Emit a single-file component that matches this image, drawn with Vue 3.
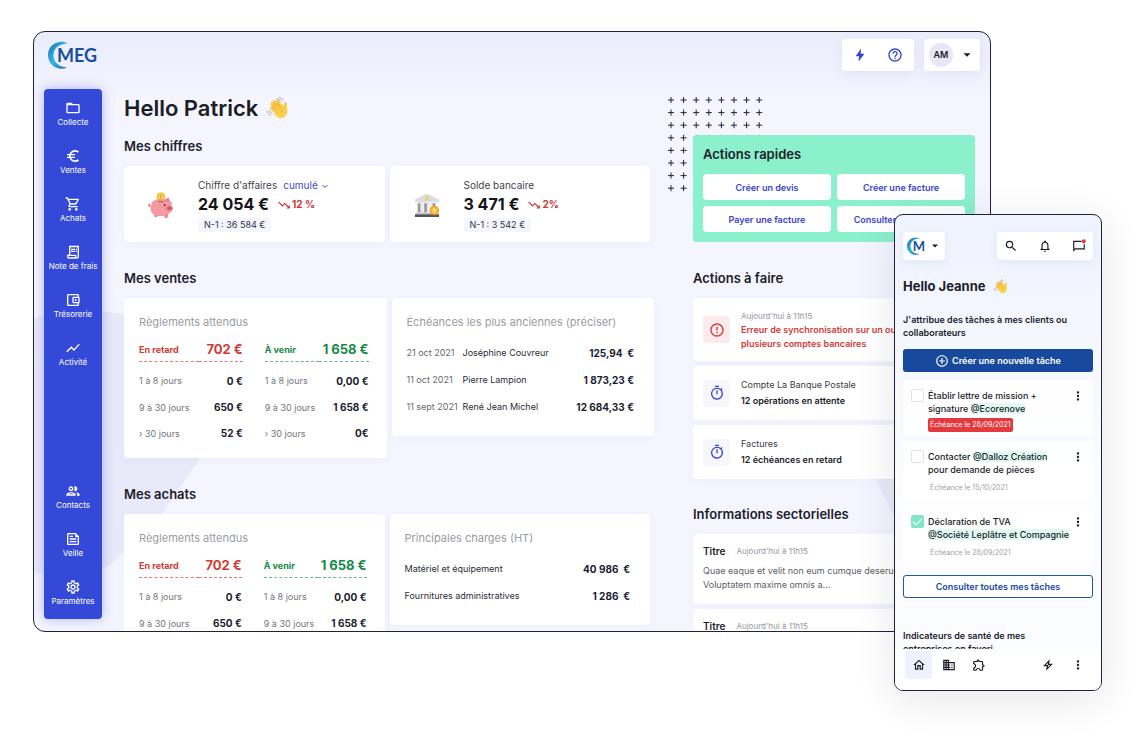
<script setup>
import { ref } from 'vue'

const icons = {
  folder: 'M20 18H4V8h16m0-2h-8l-2-2H4a2 2 0 0 0-2 2v12a2 2 0 0 0 2 2h16a2 2 0 0 0 2-2V8a2 2 0 0 0-2-2z',
  euro: 'M15 18.5c-2.51 0-4.68-1.42-5.76-3.5H15v-2H8.58c-.05-.33-.08-.66-.08-1s.03-.67.08-1H15V9H9.24C10.32 6.92 12.5 5.5 15 5.5c1.61 0 3.09.59 4.23 1.57L21 5.3C19.41 3.87 17.3 3 15 3c-3.92 0-7.24 2.51-8.48 6H3v2h3.06c-.04.33-.06.66-.06 1s.02.67.06 1H3v2h3.52c1.24 3.49 4.56 6 8.48 6 2.31 0 4.41-.87 6-2.3l-1.78-1.77c-1.13.98-2.6 1.57-4.22 1.57z',
  cart: 'M15.55 13c.75 0 1.41-.41 1.75-1.03l3.58-6.49A.996.996 0 0 0 20.01 4H5.21l-.94-2H1v2h2l3.6 7.59-1.35 2.44C4.52 15.37 5.48 17 7 17h12v-2H7l1.1-2h7.45zM6.16 6h12.15l-2.76 5H8.53L6.16 6zM7 18c-1.1 0-1.99.9-1.99 2S5.9 22 7 22s2-.9 2-2-.9-2-2-2zm10 0c-1.1 0-1.99.9-1.99 2s.89 2 1.99 2 2-.9 2-2-.9-2-2-2z',
  receipt: 'M19.5 3.5 18 2l-1.5 1.5L15 2l-1.5 1.5L12 2l-1.5 1.5L9 2 7.5 3.5 6 2v14H3v3c0 1.66 1.34 3 3 3h12c1.66 0 3-1.34 3-3V2l-1.5 1.5zM15 20H6c-.55 0-1-.45-1-1v-1h10v2zm4-1c0 .55-.45 1-1 1s-1-.45-1-1v-3H8V5h11v14zM9 7h6v2H9zM16 7h2v2h-2zM9 10h6v2H9zM16 10h2v2h-2z',
  wallet: 'M21 7.28V5c0-1.1-.9-2-2-2H5a2 2 0 0 0-2 2v14a2 2 0 0 0 2 2h14c1.1 0 2-.9 2-2v-2.28A2 2 0 0 0 22 15V9a2 2 0 0 0-1-1.72zM20 9v6h-7V9h7zM5 19V5h14v2h-6c-1.1 0-2 .9-2 2v6c0 1.1.9 2 2 2h6v2H5zM16 10.5a1.5 1.5 0 1 0 0 3 1.5 1.5 0 0 0 0-3z',
  chart: 'M3.5 18.49l6-6.01 4 4L22 6.92l-1.41-1.41-7.09 7.97-4-4L2 16.99z',
  people: 'M9 13.75c-2.34 0-7 1.17-7 3.5V19h14v-1.75c0-2.33-4.66-3.5-7-3.5zM4.34 17c.84-.58 2.87-1.25 4.66-1.25s3.82.67 4.66 1.25H4.34zM9 12c1.93 0 3.5-1.57 3.5-3.5S10.93 5 9 5 5.5 6.57 5.5 8.5 7.07 12 9 12zm0-5c.83 0 1.5.67 1.5 1.5S9.83 10 9 10s-1.5-.67-1.5-1.5S8.17 7 9 7zm7.04 6.81c1.16.84 1.96 1.96 1.96 3.44V19h4v-1.75c0-2.02-3.5-3.17-5.96-3.44zM15 12c1.93 0 3.5-1.57 3.5-3.5S16.93 5 15 5c-.54 0-1.04.13-1.5.35.63.89 1 1.98 1 3.15s-.37 2.26-1 3.15c.46.22.96.35 1.5.35z',
  feed: 'M16 3H5c-1.1 0-2 .9-2 2v14c0 1.1.9 2 2 2h14c1.1 0 2-.9 2-2V8l-5-5zm3 16H5V5h10v4h4v10zM7 17h10v-2H7v2zm5-10H7v2h5V7zm-5 6h10v-2H7v2z',
  settings: 'M19.43 12.98c.04-.32.07-.64.07-.98 0-.34-.03-.66-.07-.98l2.11-1.65c.19-.15.24-.42.12-.64l-2-3.46a.5.5 0 0 0-.61-.22l-2.49 1c-.52-.4-1.08-.73-1.69-.98l-.38-2.65A.488.488 0 0 0 14 2h-4c-.25 0-.46.18-.49.42l-.38 2.65c-.61.25-1.17.59-1.69.98l-2.49-1a.5.5 0 0 0-.61.22l-2 3.46c-.13.22-.07.49.12.64l2.11 1.65c-.04.32-.07.65-.07.98 0 .33.03.66.07.98l-2.11 1.65c-.19.15-.24.42-.12.64l2 3.46a.5.5 0 0 0 .61.22l2.49-1c.52.4 1.08.73 1.69.98l.38 2.65c.03.24.24.42.49.42h4c.25 0 .46-.18.49-.42l.38-2.65c.61-.25 1.17-.59 1.69-.98l2.49 1a.5.5 0 0 0 .61-.22l2-3.46c.12-.22.07-.49-.12-.64l-2.11-1.65zm-1.98-1.71c.04.31.05.52.05.73 0 .21-.02.43-.05.73l-.14 1.13.89.7 1.08.84-.7 1.21-1.27-.51-1.04-.42-.9.68c-.43.32-.84.56-1.25.73l-1.06.43-.16 1.13-.2 1.35h-1.4l-.19-1.35-.16-1.13-1.06-.43c-.43-.18-.83-.41-1.23-.71l-.91-.7-1.06.43-1.27.51-.7-1.21 1.08-.84.89-.7-.14-1.13c-.03-.31-.05-.54-.05-.74s.02-.43.05-.73l.14-1.13-.89-.7-1.08-.84.7-1.21 1.27.51 1.04.42.9-.68c.43-.32.84-.56 1.25-.73l1.06-.43.16-1.13.2-1.35h1.39l.19 1.35.16 1.13 1.06.43c.43.18.83.41 1.23.71l.91.7 1.06-.43 1.27-.51.7 1.21-1.07.85-.89.7.14 1.13zM12 8c-2.21 0-4 1.79-4 4s1.79 4 4 4 4-1.79 4-4-1.79-4-4-4zm0 6c-1.1 0-2-.9-2-2s.9-2 2-2 2 .9 2 2-.9 2-2 2z',
  bolt: 'M10.500 22h-1l1-8H5.500c-.6 0-.6-.4-.4-.8L13 2h1l-1 8h5.500c.5 0 .6.4.5.6z',
  help: 'M11 18h2v-2h-2v2zm1-16C6.48 2 2 6.48 2 12s4.48 10 10 10 10-4.48 10-10S17.52 2 12 2zm0 18c-4.41 0-8-3.59-8-8s3.59-8 8-8 8 3.59 8 8-3.59 8-8 8zm0-14c-2.21 0-4 1.79-4 4h2c0-1.1.9-2 2-2s2 .9 2 2c0 2-3 1.75-3 5h2c0-2.25 3-2.5 3-5 0-2.21-1.79-4-4-4z',
  down: 'M16 18l2.29-2.29-4.88-4.88-4 4L2 7.41 3.41 6l6 6 4-4 6.3 6.29L22 12v6z',
  error: 'M11 15h2v2h-2v-2zm0-8h2v6h-2V7zm.99-5C6.47 2 2 6.48 2 12s4.47 10 9.99 10C17.52 22 22 17.52 22 12S17.52 2 11.99 2zM12 20c-4.42 0-8-3.58-8-8s3.58-8 8-8 8 3.58 8 8-3.58 8-8 8z',
  timer: 'M15 1H9v2h6V1zm-4 13h2V8h-2v6zm8.03-6.61 1.42-1.42c-.43-.51-.9-.99-1.41-1.41l-1.42 1.42A8.962 8.962 0 0 0 12 4c-4.97 0-9 4.03-9 9s4.02 9 9 9a8.994 8.994 0 0 0 7.03-14.61zM12 20c-3.87 0-7-3.13-7-7s3.13-7 7-7 7 3.13 7 7-3.13 7-7 7z',
  search: 'M15.5 14h-.79l-.28-.27A6.471 6.471 0 0 0 16 9.5 6.5 6.5 0 1 0 9.5 16c1.61 0 3.09-.59 4.23-1.57l.27.28v.79l5 4.99L20.49 19l-4.99-5zm-6 0C7.01 14 5 11.99 5 9.5S7.01 5 9.5 5 14 7.01 14 9.5 11.99 14 9.5 14z',
  bell: 'M12 22c1.1 0 2-.9 2-2h-4c0 1.1.9 2 2 2zm6-6v-5c0-3.07-1.63-5.64-4.5-6.32V4c0-.83-.67-1.5-1.5-1.5s-1.5.67-1.5 1.5v.68C7.64 5.36 6 7.92 6 11v5l-2 2v1h16v-1l-2-2zm-2 1H8v-6c0-2.48 1.51-4.5 4-4.5s4 2.02 4 4.5v6z',
  chat: 'M16 3H2v19l4-4h16V9h-2v7H5l-1 1V5h12z',
  plus: 'M13 7h-2v4H7v2h4v4h2v-4h4v-2h-4V7zm-1-5C6.48 2 2 6.48 2 12s4.48 10 10 10 10-4.48 10-10S17.52 2 12 2zm0 18c-4.41 0-8-3.59-8-8s3.59-8 8-8 8 3.59 8 8-3.59 8-8 8z',
  home: 'M12 5.69l5 4.5V18h-2v-6H9v6H7v-7.81l5-4.5M12 3L2 12h3v8h6v-6h2v6h6v-8h3L12 3z',
  building: 'M12 7V3H2v18h20V7H12zM6 19H4v-2h2v2zm0-4H4v-2h2v2zm0-4H4V9h2v2zm0-4H4V5h2v2zm4 12H8v-2h2v2zm0-4H8v-2h2v2zm0-4H8V9h2v2zm0-4H8V5h2v2zm10 12h-8v-2h2v-2h-2v-2h2v-2h-2V9h8v10zm-2-8h-2v2h2v-2zm0 4h-2v2h2v-2z',
  puzzle: 'M10.5 4.5c.28 0 .5.22.5.5v2h6v6h2c.28 0 .5.22.5.5s-.22.5-.5.5h-2v6h-2.12c-.68-1.75-2.39-3-4.38-3s-3.7 1.25-4.38 3H4v-2.12c1.75-.68 3-2.39 3-4.38 0-1.99-1.24-3.7-2.99-4.38L4 7h6V5c0-.28.22-.5.5-.5m0-2A2.5 2.5 0 0 0 8 5H4c-1.1 0-1.99.9-1.99 2v3.8h.29c1.49 0 2.7 1.21 2.7 2.7s-1.21 2.7-2.7 2.7H2V20c0 1.1.9 2 2 2h3.8v-.3c0-1.49 1.21-2.7 2.7-2.7s2.7 1.21 2.7 2.7v.3H17c1.1 0 2-.9 2-2v-4a2.5 2.5 0 0 0 0-5V7c0-1.1-.9-2-2-2h-4a2.5 2.5 0 0 0-2.5-2.5z',
  boltLine: 'M15 2 3.5 14H10l-1.5 8L20.5 10H14zM11.8 8.2 11.500 12h4.200l-3.600 3.800.4-3.800H8.200z',
  more: 'M12 8c1.1 0 2-.9 2-2s-.9-2-2-2-2 .9-2 2 .9 2 2 2zm0 2c-1.1 0-2 .9-2 2s.9 2 2 2 2-.9 2-2-.9-2-2-2zm0 6c-1.1 0-2 .9-2 2s.9 2 2 2 2-.9 2-2-.9-2-2-2z',
  caret: 'M6 9h12l-6 6z'
}

const navTop = [
  { icon: 'folder', label: 'Collecte' },
  { icon: 'euro', label: 'Ventes' },
  { icon: 'cart', label: 'Achats' },
  { icon: 'receipt', label: 'Note de frais' },
  { icon: 'wallet', label: 'Trésorerie' },
  { icon: 'chart', label: 'Activité' }
]
const navBottom = [
  { icon: 'people', label: 'Contacts' },
  { icon: 'feed', label: 'Veille' },
  { icon: 'settings', label: 'Paramètres' }
]

const settlements = [
  { kind: 'late', title: 'En retard', total: '702 €', rows: [['1 à 8 jours', '0 €'], ['9 à 30 jours', '650 €'], ['› 30 jours', '52 €']] },
  { kind: 'coming', title: 'À venir', total: '1 658 €', rows: [['1 à 8 jours', '0,00 €'], ['9 à 30 jours', '1 658 €'], ['› 30 jours', '0€']] }
]
const oldest = [
  ['21 oct 2021', 'Joséphine Couvreur', '125,94  €'],
  ['11 oct 2021', 'Pierre Lampion', '1 873,23 €'],
  ['11 sept 2021', 'René Jean Michel', '12 684,33 €']
]
const charges = [
  ['Matériel et équipement', '40 986  €'],
  ['Fournitures administratives', '1 286  €']
]
const quick = ['Créer un devis', 'Créer une facture', 'Payer une facture', 'Consulter une facture']
const todos = [
  { top: 'Compte La Banque Postale', main: '12 opérations en attente' },
  { top: 'Factures', main: '12 échéances en retard' }
]
const tasks = ref([
  { id: 't1', before: 'Établir lettre de mission + signature', tag: '@Ecorenove', after: '', due: 'Échéance le 28/09/2021', late: true, done: false },
  { id: 't2', before: 'Contacter', tag: '@Dalloz Création', after: 'pour demande de pièces', due: 'Échéance le 15/10/2021', late: false, done: false },
  { id: 't3', before: 'Déclaration de TVA', tag: '@Société Leplâtre et Compagnie', after: '', due: 'Échéance le 28/09/2021', late: false, done: true }
])
const mode = ref('cumulé')
</script>

<template>
  <div class="stage">
    <svg class="defs" width="0" height="0" aria-hidden="true">
      <defs>
        <linearGradient id="crescent" x1="0" y1="0" x2="1" y2="1">
          <stop offset="0" stop-color="#1c6fb5" />
          <stop offset="0.5" stop-color="#35b6e6" />
          <stop offset="1" stop-color="#1e5fa8" />
        </linearGradient>
        <symbol id="wave" viewBox="0 0 24 24">
          <g stroke="#f6c544" stroke-linecap="round" fill="none">
            <path stroke-width="3.200" d="M12.500 14 6.200 7.800M14 12 8.500 5.500M16 11 12 5M11 16.500 6 12" />
            <path stroke-width="3" d="M19.500 13 20.500 7.500" />
          </g>
          <path fill="#f9cf4f" d="M9 11.500 16 7.500l3.500 3 2.700 1.500c.8 5-1.200 9.500-5.200 10.500-3 .7-5.500-1-8-4z" />
          <path fill="none" stroke="#dfa02c" stroke-width=".7" stroke-linecap="round" d="m8 11 3.500 3.500M10 8.500l4 4.500M13 7.500l2.500 4M18.500 12c-2 .5-2.500 2.500-2 4.500" />
          <path fill="none" stroke="#8d8d9c" stroke-width=".8" stroke-linecap="round" d="M11.500 2.500c1.500 0 3 1 3.700 2.300M14 1c1.500.3 3 1.500 3.500 3M1.500 15.500c.3 2 1.500 3.500 3 4.200M3.800 14.500c.4 1.600 1.400 2.800 2.700 3.500" />
        </symbol>
      </defs>
    </svg>

    <div class="desktop">
      <svg class="blob" viewBox="0 0 170 270" aria-hidden="true">
        <path d="M0 9C20-2 60-2 90 5L168 90Q172 145 166 148L130 201 78 254Q40 272 0 262Z" />
      </svg>
      <svg class="blob-right" viewBox="0 0 120 160" aria-hidden="true"><path d="M0 0C12 40 50 110 120 160V0z" /></svg>

      <header class="topbar">
        <a class="logo" href="#" aria-label="MEG">
          <svg viewBox="0 0 28 28" aria-hidden="true"><path fill="url(#crescent)" d="M20 2.500C12-2 0 3 0 14s11 16.500 19 12.500C10 26 5.500 20.500 5.500 14S11 2.500 20 2.500z" /></svg>
          <span>MEG</span>
        </a>
        <div class="tools">
          <div class="chip">
            <button aria-label="Actions"><svg class="i14 blue" viewBox="0 0 24 24"><path :d="icons.bolt" /></svg></button>
            <button aria-label="Aide"><svg class="i16 blue" viewBox="0 0 24 24"><path :d="icons.help" /></svg></button>
          </div>
          <button class="chip account" aria-label="Compte AM">
            <span class="avatar">AM</span>
            <svg class="i14" viewBox="0 0 24 24"><path :d="icons.caret" /></svg>
          </button>
        </div>
      </header>

      <div class="body">
        <nav class="side">
          <div class="group">
            <a v-for="n in navTop" :key="n.label" href="#">
              <svg class="i16" viewBox="0 0 24 24"><path :d="icons[n.icon]" /></svg>{{ n.label }}
            </a>
          </div>
          <div class="group">
            <a v-for="n in navBottom" :key="n.label" href="#">
              <svg class="i16" viewBox="0 0 24 24"><path :d="icons[n.icon]" /></svg>{{ n.label }}
            </a>
          </div>
        </nav>

        <main class="main">
          <h1>Hello Patrick <svg viewBox="0 0 24 24" aria-hidden="true"><use href="#wave" /></svg></h1>

          <section>
            <h2>Mes chiffres</h2>
            <div class="pair">
              <article class="card kpi">
                <svg class="art" viewBox="0 0 28 30" aria-hidden="true">
                  <circle cx="14" cy="6" r="4.500" fill="#f2b61d" /><circle cx="14" cy="6" r="3" fill="#fbd54a" /><path d="M14 4v4" stroke="#c98a10" />
                  <path fill="#e8848c" d="M6 22h5l-1 6H7zM17 22h5l-1 7h-3z" />
                  <path fill="#f49aa1" d="M4 12c3-4 13-5 18-1l4 1-1 4c2 1 2 5 0 6-3 4-8 5-12 5-7 0-11-4-10-9z" />
                  <path fill="#e57f88" d="M17 10l5-3 2 5zM2 13c-3 1-2 5 1 4z" />
                  <ellipse cx="23" cy="18.500" rx="3.500" ry="3" fill="#e8747f" /><circle cx="22" cy="18.500" r=".7" fill="#8d2f3c" /><circle cx="24.500" cy="18.500" r=".7" fill="#8d2f3c" /><circle cx="18" cy="15" r="1" fill="#4a2b33" />
                  <path d="M11 11.500h6" stroke="#a84f5c" />
                </svg>
                <div>
                  <div class="kpi-name">
                    <label for="mode">Chiffre d'affaires</label>
                    <span class="picker">
                      <select id="mode" v-model="mode"><option>cumulé</option><option>annuel</option></select>
                      <svg viewBox="0 0 8 8" aria-hidden="true"><path d="M1.500 3 4 5.500 6.500 3" /></svg>
                    </span>
                  </div>
                  <div class="kpi-value">24 054 € <span class="trend"><svg class="i14" viewBox="0 0 24 24"><path :d="icons.down" /></svg>12 %</span></div>
                  <span class="prev">N-1 : 36 584 €</span>
                </div>
              </article>
              <article class="card kpi">
                <svg class="art" viewBox="0 0 28 30" aria-hidden="true">
                  <path fill="#dcdce0" d="M14 3 27 9v3H1V9z" /><path fill="#f3cf55" d="m14 5 .9 1.700 1.900.3-1.400 1.300.3 1.900-1.700-.9-1.700.9.3-1.900L11.200 7l1.900-.3z" />
                  <path fill="#ececef" d="M4 12h20v11H4z" /><path fill="#9b9ba3" d="M4 13h3v10H4zM11 13h3v10h-3zM20 13h3v10h-3z" />
                  <path fill="#c7c7cd" d="M2 23h24v2H2z" /><path fill="#56565f" d="M1 25h26v3H1z" />
                  <circle cx="22" cy="21" r="5" fill="#f39a1e" /><circle cx="22" cy="21" r="3.500" fill="#fbc23c" /><path d="M22 19v4" stroke="#fff3c9" stroke-width="1.500" />
                </svg>
                <div>
                  <div class="kpi-name">Solde bancaire</div>
                  <div class="kpi-value">3 471 € <span class="trend"><svg class="i14" viewBox="0 0 24 24"><path :d="icons.down" /></svg>2%</span></div>
                  <span class="prev">N-1 : 3 542 €</span>
                </div>
              </article>
            </div>
          </section>

          <section>
            <h2>Mes ventes</h2>
            <div class="pair wide">
              <article class="card">
                <h3>Règlements attendus</h3>
                <div class="tables">
                  <table v-for="s in settlements" :key="s.kind" :class="['sums', s.kind]">
                    <thead><tr><th scope="col">{{ s.title }}</th><th scope="col">{{ s.total }}</th></tr></thead>
                    <tbody><tr v-for="r in s.rows" :key="r[0]"><td>{{ r[0] }}</td><td>{{ r[1] }}</td></tr></tbody>
                  </table>
                </div>
              </article>
              <article class="card">
                <h3>Échéances les plus anciennes (préciser)</h3>
                <table class="list dated">
                  <tbody><tr v-for="r in oldest" :key="r[0]"><td>{{ r[0] }}</td><td>{{ r[1] }}</td><td>{{ r[2] }}</td></tr></tbody>
                </table>
              </article>
            </div>
          </section>

          <section>
            <h2>Mes achats</h2>
            <div class="pair">
              <article class="card">
                <h3>Règlements attendus</h3>
                <div class="tables">
                  <table v-for="s in settlements" :key="s.kind" :class="['sums', s.kind]">
                    <thead><tr><th scope="col">{{ s.title }}</th><th scope="col">{{ s.total }}</th></tr></thead>
                    <tbody><tr v-for="r in s.rows.slice(0, 2)" :key="r[0]"><td>{{ r[0] }}</td><td>{{ r[1] }}</td></tr></tbody>
                  </table>
                </div>
              </article>
              <article class="card">
                <h3>Principales charges (HT)</h3>
                <table class="list">
                  <tbody><tr v-for="r in charges" :key="r[0]"><td>{{ r[0] }}</td><td>{{ r[1] }}</td></tr></tbody>
                </table>
              </article>
            </div>
          </section>
        </main>

        <aside class="aside">
          <section class="quick-wrap">
            <svg class="crosses" viewBox="0 0 101 101" aria-hidden="true">
              <template v-for="y in 8" :key="y">
                <path v-for="x in 8" :key="x" :d="`M${(x - 1) * 12.6} ${(y - 1) * 12.6 + 3}h6m-3-3v6`" />
              </template>
            </svg>
            <div class="quick">
              <h2>Actions rapides</h2>
              <div class="quick-grid"><button v-for="q in quick" :key="q">{{ q }}</button></div>
            </div>
          </section>

          <section class="stack">
            <h2>Actions à faire</h2>
            <article class="card todo alert">
              <span class="tile"><svg class="i16" viewBox="0 0 24 24"><path :d="icons.error" /></svg></span>
              <div>
                <time>Aujourd'hui à 11h15</time>
                <p>Erreur de synchronisation sur un ou plusieurs comptes bancaires</p>
              </div>
            </article>
            <article v-for="t in todos" :key="t.top" class="card todo">
              <span class="tile"><svg class="i16" viewBox="0 0 24 24"><path :d="icons.timer" /></svg></span>
              <div><span>{{ t.top }}</span><strong>{{ t.main }}</strong></div>
            </article>
          </section>

          <section class="stack">
            <h2>Informations sectorielles</h2>
            <article v-for="n in 2" :key="n" class="card news">
              <header><h3>Titre</h3><time>Aujourd'hui à 11h15</time></header>
              <p v-if="n === 1">Quae eaque et velit non eum cumque deserunt. Voluptatem maxime omnis a...</p>
            </article>
          </section>
        </aside>
      </div>
    </div>

    <div class="phone">
      <div class="screen">
        <header class="phone-top">
          <button class="chip brand" aria-label="MEG">
            <span class="logo small">
              <svg viewBox="0 0 28 28" aria-hidden="true"><path fill="url(#crescent)" d="M20 2.500C12-2 0 3 0 14s11 16.500 19 12.500C10 26 5.500 20.500 5.500 14S11 2.500 20 2.500z" /></svg>
              <span>M</span>
            </span>
            <svg class="i12" viewBox="0 0 24 24"><path :d="icons.caret" /></svg>
          </button>
          <div class="chip phone-tools">
            <button aria-label="Rechercher"><svg class="i14" viewBox="0 0 24 24"><path :d="icons.search" /></svg></button>
            <button aria-label="Notifications"><svg class="i14" viewBox="0 0 24 24"><path :d="icons.bell" /></svg></button>
            <button aria-label="Messages"><svg class="i14" viewBox="0 0 24 24"><path :d="icons.chat" /><circle cx="20" cy="4" r="3.500" fill="#e5384b" /></svg></button>
          </div>
        </header>

        <h1>Hello Jeanne <svg viewBox="0 0 24 24" aria-hidden="true"><use href="#wave" /></svg></h1>
        <h2>J'attribue des tâches à mes clients ou collaborateurs</h2>
        <button class="primary"><svg class="i14" viewBox="0 0 24 24"><path :d="icons.plus" /></svg>Créer une nouvelle tâche</button>

        <ul class="tasks">
          <li v-for="t in tasks" :key="t.id">
            <input :id="t.id" v-model="t.done" type="checkbox" />
            <div class="task">
              <label :for="t.id">{{ t.before }} <mark>{{ t.tag }}</mark> {{ t.after }}</label>
              <span :class="['due', { late: t.late }]">{{ t.due }}</span>
            </div>
            <button aria-label="Options"><svg class="i14" viewBox="0 0 24 24"><path :d="icons.more" /></svg></button>
          </li>
        </ul>

        <button class="outline">Consulter toutes mes tâches</button>
        <h2 class="health">Indicateurs de santé de mes entreprises en favori</h2>
      </div>

      <nav class="tabs">
        <a class="on" href="#" aria-label="Accueil"><svg class="i14" viewBox="0 0 24 24"><path :d="icons.home" /></svg></a>
        <a href="#" aria-label="Entreprises"><svg class="i14" viewBox="0 0 24 24"><path :d="icons.building" /></svg></a>
        <a href="#" aria-label="Extensions"><svg class="i14" viewBox="0 0 24 24"><path :d="icons.puzzle" /></svg></a>
        <a class="push" href="#" aria-label="Actions"><svg class="i14" viewBox="0 0 24 24"><path :d="icons.boltLine" /></svg></a>
        <a href="#" aria-label="Plus"><svg class="i14" viewBox="0 0 24 24"><path :d="icons.more" /></svg></a>
      </nav>
    </div>
  </div>
</template>

<style>
body { background: #fff; }
</style>

<style scoped>
* { box-sizing: border-box; }
h1, h2, h3, p, ul { margin: 0; padding: 0; }
ul { list-style: none; }
svg { display: block; fill: currentColor; flex: none; }
a { color: inherit; text-decoration: none; }
button, select, input { font: inherit; color: inherit; margin: 0; padding: 0; border: 0; background: none; cursor: pointer; }
button { display: flex; align-items: center; justify-content: center; }
.defs { position: absolute; }
.i12 { width: 12px; height: 12px; }
.i14 { width: 14px; height: 14px; }
.i16 { width: 16px; height: 16px; }
.blue { color: #3444d8; }

.stage {
  position: relative;
  height: 100vh;
  min-height: 600px;
  padding: 31px 151px 104px 33px;
  overflow: hidden;
  font-family: Inter, "Noto Sans", "Liberation Sans", sans-serif;
  font-size: 9px;
  color: #1c1d2b;
}
.desktop {
  position: relative;
  height: 100%;
  display: flex;
  flex-direction: column;
  padding: 7px 10px 12px;
  overflow: hidden;
  border: 1px solid #1d2239;
  border-radius: 12px;
  background: linear-gradient(#ebecfb, #f4f5fe 70px);
}
.blob { position: absolute; left: 0; top: 278px; width: 170px; fill: #e8e9f9; }
.blob-right { position: absolute; right: 0; top: 430px; width: 120px; fill: #ebecf9; }

.topbar { position: relative; flex: none; display: flex; justify-content: space-between; height: 32px; margin-bottom: 18px; }
.logo { position: relative; display: flex; align-items: center; margin-left: 4px; font-family: Lato, sans-serif; font-size: 18px; font-weight: 700; color: #17509c; }
.logo svg { width: 28px; height: 28px; margin-right: -19px; }
.logo span { position: relative; }
.tools { display: flex; gap: 10px; }
.chip { display: flex; align-items: center; background: #fff; border-radius: 3px; box-shadow: 0 3px 10px rgba(70, 80, 160, .08); }
.tools div.chip { gap: 20px; padding: 0 11px; }
.account { gap: 7px; padding: 0 6px 0 5px; }
.avatar { width: 24px; line-height: 24px; border-radius: 50%; background: #e9e7f7; font-size: 9px; font-weight: 600; text-align: center; }

.body { position: relative; flex: 1; min-height: 0; display: flex; }
.side {
  flex: none;
  width: 58px;
  display: flex;
  flex-direction: column;
  justify-content: space-between;
  padding: 11px 0 12px;
  border-radius: 4px;
  background: #3549d9;
  color: #fff;
  font-size: 8px;
  line-height: 12px;
  box-shadow: 0 0 12px rgba(80, 84, 220, .4);
}
.group { display: flex; flex-direction: column; gap: 20px; }
.group a { display: flex; flex-direction: column; align-items: center; white-space: nowrap; }

.main { flex: 1; min-width: 0; margin-left: 22px; }
.main h1 { display: flex; align-items: center; gap: 8px; font-size: 22px; line-height: 38px; font-weight: 600; color: #1d1d24; }
.main h1 svg { width: 23px; height: 24px; }
h2 { font-size: 13px; line-height: 20px; font-weight: 600; margin-bottom: 10px; }
.main section { margin-bottom: 26px; }
.main h1 + section { margin-top: 9px; }
.pair { display: grid; grid-template-columns: 1fr 1fr; gap: 5px; align-items: start; }
.wide { margin-right: -4px; }
.card { background: #fff; border-radius: 4px; box-shadow: 0 2px 8px rgba(90, 100, 200, .04); }
.main .card { padding: 16px 18px 11px 15px; }
.main .kpi { display: flex; gap: 24px; padding: 11px 16px 9px 24px; height: 76px; }
.art { width: 26px; height: 28px; align-self: center; }
.kpi-name { display: flex; gap: 6px; font-size: 10px; line-height: 17px; color: #44464f; }
.picker { display: flex; align-items: center; color: #3d49d6; }
.picker select { appearance: none; width: 38px; color: #3d49d6; }
.picker svg { width: 8px; height: 8px; fill: none; stroke: currentColor; }
.kpi-value { display: flex; align-items: center; gap: 8px; font-size: 16px; line-height: 21px; font-weight: 700; color: #141419; white-space: nowrap; }
.trend { display: flex; align-items: center; gap: 1px; font-size: 10px; color: #cf3533; }
.prev { display: inline-block; margin-top: 3px; padding: 0 6px; border-radius: 3px; background: #f4f5fd; font-size: 9px; line-height: 14px; color: #33364a; }

h3 { font-size: 11px; line-height: 16px; font-weight: 400; color: #9b9ca3; white-space: nowrap; }
.tables { display: grid; grid-template-columns: 1fr 1fr; gap: 22px; margin: 7px 0 1px; }
table { width: 100%; border-collapse: separate; border-spacing: 0; }
th, td { padding: 0; text-align: left; white-space: nowrap; font-weight: 400; }
th:last-child, td:last-child { text-align: right; font-weight: 700; }
.sums th { height: 25px; border-bottom: 1px dashed; font-size: 9px; font-weight: 700; }
.sums th:last-child { font-size: 13px; }
.late th { color: #d33a34; border-color: #dd7d78; }
.coming th { color: #138a45; border-color: #6cb68b; }
.sums td { height: 26px; color: #74757c; }
.sums tbody tr:first-child td { height: 32px; padding-top: 5px; }
.sums td:last-child, .list td:last-child { font-size: 10px; color: #1b1c30; white-space: pre; }
.list { margin-top: 9px; margin-bottom: 5px; }
.list td { height: 27px; color: #2b2c35; }
.dated td:first-child { width: 56px; color: #66676e; }
.main .card:has(.list) { padding-right: 20px; }

.aside { flex: none; width: 282px; margin: 46px 5px 0 43px; }
.quick-wrap { position: relative; }
.crosses { position: absolute; left: -25px; top: -38px; width: 101px; height: 101px; overflow: visible; fill: none; stroke: #20223a; }
.quick { position: relative; padding: 9px 10px 10px; border-radius: 4px; background: #8bf0cc; }
.quick-grid { display: grid; grid-template-columns: 1fr 1fr; gap: 6px; }
.quick button { height: 26px; border-radius: 4px; background: #fff; color: #3a43cf; font-size: 9px; font-weight: 600; white-space: nowrap; }
.stack { display: flex; flex-direction: column; gap: 5px; margin-top: 26px; }
.stack h2 { margin-bottom: 5px; }
.stack + .stack { margin-top: 25px; }
.todo { display: flex; align-items: center; gap: 11px; min-height: 54px; padding: 10px; }
.alert { min-height: 63px; }
.tile { display: grid; place-items: center; width: 27px; height: 27px; border-radius: 4px; background: #f6f7fb; color: #3e49cf; }
.alert .tile { background: #fdeaec; color: #d33a34; }
.todo div { display: flex; flex-direction: column; line-height: 16px; max-width: 180px; }
.todo div span { color: #3c3d46; }
.todo strong { font-weight: 600; }
.alert p { line-height: 14px; font-weight: 600; color: #d33a34; }
.alert div { line-height: 14px; }
time { font-size: 8px; color: #94959d; }
.news { padding: 10px 10px 12px; }
.news header { display: flex; align-items: center; gap: 11px; line-height: 14px; margin-bottom: 6px; }
.news h3 { font-size: 10px; line-height: 14px; font-weight: 600; color: #1c1d2b; }
.news p { max-width: 220px; line-height: 14px; color: #5d5e66; }

.phone {
  position: absolute;
  right: 40px;
  top: 214px;
  bottom: 45px;
  width: 208px;
  display: flex;
  flex-direction: column;
  overflow: hidden;
  border: 1px solid #1d2239;
  border-radius: 9px;
  background: linear-gradient(#eff3fe, #fbfcff 60%);
  box-shadow: 0 8px 40px rgba(20, 20, 50, .1);
}
.screen { flex: 1; min-height: 0; overflow: hidden; padding: 17px 8px 0; }
.phone-top { display: flex; justify-content: space-between; height: 28px; }
.brand { gap: 4px; width: 42px; }
.small { margin: 0; font-size: 13px; }
.small svg { width: 18px; height: 18px; margin-right: -12px; }
.phone-tools { gap: 20px; padding: 0 7px; }
.phone h1 { display: flex; align-items: center; gap: 7px; margin-top: 16px; font-size: 13px; line-height: 20px; font-weight: 700; }
.phone h1 svg { width: 15px; height: 15px; }
.phone h2 { margin: 17px 0 10px; font-size: 9px; line-height: 13px; font-weight: 600; }
.primary, .outline { width: 100%; height: 23px; gap: 3px; border-radius: 3px; font-size: 9px; font-weight: 600; }
.primary { background: #174a9f; color: #fff; }
.outline { border: 1px solid #2555a5; background: #fff; color: #174a9f; }
.tasks { display: flex; flex-direction: column; gap: 5px; margin: 8px 0 9px; }
.tasks li { display: flex; align-items: flex-start; gap: 4px; padding: 9px 8px 4px; border-radius: 4px; background: rgba(255, 255, 255, .85); }
.tasks input { flex: none; appearance: none; width: 13px; height: 13px; border: 1px solid #e2e3e9; border-radius: 2px; background: #fff; }
.tasks input:checked { border-color: #7fe6c3; background: #7fe6c3; }
.tasks input:checked::after { content: ""; display: block; width: 8px; height: 4px; margin: 2px 1px; border: solid #fff; border-width: 0 0 1px 1px; transform: rotate(-45deg); }
.task { flex: 1; min-width: 0; display: flex; flex-direction: column; align-items: flex-start; font-weight: 500; line-height: 13px; }
mark { background: #e0f9f1; color: inherit; white-space: nowrap; }
.due { margin: 5px 0 2px; padding: 0 2px; border-radius: 2px; font-size: 7px; font-weight: 400; line-height: 14px; color: #a0a1a8; white-space: nowrap; }
.due.late { margin: 3px 0 0; background: #e5383f; color: #fff; }
.phone .health { max-width: 150px; margin: 31px 0 0; }
.tabs { flex: none; display: flex; gap: 3px; height: 41px; padding: 2px 10px 10px; background: #fff; }
.tabs a { display: grid; place-items: center; width: 27px; height: 28px; border-radius: 3px; }
.tabs .on { background: #edf2fe; }
.tabs .push { margin-left: auto; }
</style>
